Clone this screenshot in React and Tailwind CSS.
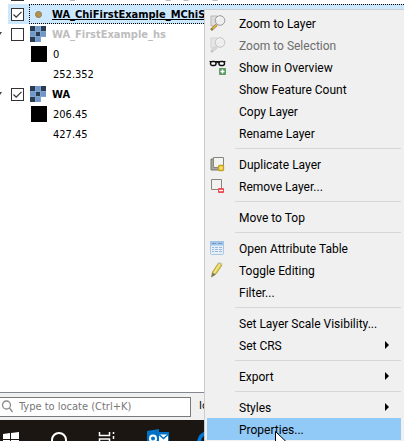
import React from "react";

function Glass({ faded }) {
  return (
    <svg viewBox="0 0 18 18" className={faded ? "size-[18px] opacity-50" : "size-[18px]"} fill="none">
      <path d="M2 2h6v10H2z" fill="#dedede" stroke="#b5b5b5" />
      <path d="M7.500 11l-5.500 5" stroke={faded ? "#999" : "#8d7a4d"} strokeWidth="2.600" />
      <path d="M7.500 11l-4 3.500" stroke={faded ? "#ccc" : "#f0bf2f"} strokeWidth="1.500" />
      <circle cx="11" cy="6.500" r="4.800" fill="#eeeeeecc" stroke="#999" />
      <path d="M8 6a3 3 0 0 1 3-3" stroke="#fff" />
    </svg>
  );
}

function Glasses() {
  return (
    <svg viewBox="0 0 18 18" className="size-[18px]" fill="none">
      <path d="M.5 3.500h16M7 5q1.500-1 3 0" stroke="#111" strokeWidth="1.200" />
      <rect x="1.500" y="3.500" width="5.500" height="4" rx="2" fill="#fff" stroke="#111" strokeWidth="1.400" />
      <rect x="10" y="3.500" width="5.500" height="4" rx="2" fill="#fff" stroke="#111" strokeWidth="1.400" />
      <rect x="10" y="10" width="7" height="7" rx="1" fill="#5b9a62" />
      <path d="M13.500 11.500v4M11.500 13.500h4" stroke="#fff" strokeWidth="1.500" />
    </svg>
  );
}

function Duplicate() {
  return (
    <svg viewBox="0 0 18 18" className="size-[18px]" fill="none">
      <path d="M2 4h10v11H2z" fill="#a6a79f" stroke="#777970" />
      <path d="M4.500 2.500h10v10h-10z" fill="#f2f2f0" stroke="#85877e" />
      <rect x="9.500" y="10.500" width="5" height="5" rx="1" fill="#f6dc72" stroke="#c9a21b" strokeWidth="1.400" />
    </svg>
  );
}

function Remove() {
  return (
    <svg viewBox="0 0 18 18" className="size-[18px]" fill="none">
      <path d="M2.500 2.500h10v10h-10z" fill="#f2f2f0" stroke="#85877e" />
      <rect x="9" y="11" width="6" height="5" rx="1" fill="#ee4a50" />
      <path d="M10 13.500h4" stroke="#fff" strokeWidth="1.300" />
    </svg>
  );
}

function TableIcon() {
  return (
    <svg viewBox="0 0 18 18" className="size-[18px]" fill="none">
      <rect x="1.500" y="2.500" width="13" height="13" rx="1" fill="#e6eef7" stroke="#a9c6e3" />
      <path d="M1 2h14v4.500H1z" fill="#a3c6e8" />
      <path d="M3 4.500h4M9 4.500h4" stroke="#6f9bc8" />
      <path d="M3 8.500h2M6 8.500h3M10 8.500h3M3 10.500h2M6 10.500h3M10 10.500h3M3 12.500h2M6 12.500h3M10 12.500h3" stroke="#9db9d6" />
    </svg>
  );
}

function Pencil() {
  return (
    <svg viewBox="0 0 18 18" className="size-[18px]" fill="none">
      <path d="M2.500 16l1-5 6-9 3.500 2-6 9z" fill="#e3cc45" stroke="#a3973f" strokeWidth=".8" />
      <path d="M5 12l6-9" stroke="#f7ec95" strokeWidth="1.200" />
      <path d="M2.500 16l1-4.500 3 2z" fill="#777" />
      <path d="M9.500 2l3.500 2 .5-1.500-3-1.500z" fill="#c8c8b8" />
    </svg>
  );
}

function Raster() {
  return (
    <svg viewBox="0 0 16 16" className="size-4 shrink-0" shapeRendering="crispEdges">
      <path d="M0 0h16v16H0z" fill="#6f97c8" />
      <path d="M0 0h5v5H0zM11 0h5v5h-5zM6 6h4v4H6zM0 11h5v5H0z" fill="#2b3b50" />
      <path d="M5 0h1v16H5zM10 0h1v16h-1zM0 5h16v1H0zM0 10h16v1H0z" fill="#7fa3d0" />
      <path d="M11 11h5v5h-5z" fill="#fff" />
    </svg>
  );
}

const groups = [
  [
    { label: "Zoom to Layer", icon: <Glass /> },
    { label: "Zoom to Selection", icon: <Glass faded />, disabled: true },
    { label: "Show in Overview", icon: <Glasses /> },
    { label: "Show Feature Count" },
    { label: "Copy Layer" },
    { label: "Rename Layer" },
  ],
  [
    { label: "Duplicate Layer", icon: <Duplicate /> },
    { label: "Remove Layer...", icon: <Remove /> },
  ],
  [{ label: "Move to Top" }],
  [
    { label: "Open Attribute Table", icon: <TableIcon /> },
    { label: "Toggle Editing", icon: <Pencil /> },
    { label: "Filter..." },
  ],
  [{ label: "Set Layer Scale Visibility..." }, { label: "Set CRS", sub: true }],
  [{ label: "Export", sub: true }],
  [{ label: "Styles", sub: true }, { label: "Properties...", active: true }],
];

function MenuItem({ item }) {
  return (
    <button
      type="button"
      role="menuitem"
      disabled={item.disabled}
      className={`flex h-[22px] w-full items-center pr-3 pl-0.5 text-left whitespace-nowrap ${item.active ? "bg-[#91c9f7]" : ""} ${item.disabled ? "text-[#6d6d6d]" : "text-black"}`}
    >
      <span className="w-[30px] shrink-0">{item.icon}</span>
      <span className="flex-1 pt-0.5">{item.label}</span>
      {item.sub && (
        <svg viewBox="0 0 4 8" className="h-2 w-1">
          <path d="M0 0l4 4-4 4z" />
        </svg>
      )}
    </button>
  );
}

function Check({ label, checked }) {
  return (
    <span className="relative flex size-[13px] shrink-0">
      <input
        type="checkbox"
        aria-label={label}
        defaultChecked={checked}
        className="peer size-[13px] appearance-none border border-[#333] bg-white"
      />
      <svg viewBox="0 0 13 13" className="pointer-events-none absolute inset-0 hidden size-[13px] peer-checked:block" fill="none">
        <path d="M2.500 6.500l2.700 2.700 5.300-5.400" stroke="#333" strokeWidth="1.200" />
      </svg>
    </span>
  );
}

function Layer({ name, checked, expandable, selected, muted, icon }) {
  return (
    <div className="flex h-5 items-center">
      <span className="flex w-2 shrink-0">
        {expandable && (
          <svg viewBox="0 0 3 4" className="h-1 w-[3px]">
            <path d="M0 0h2L0 3z" fill="#444" />
          </svg>
        )}
      </span>
      <div className={`flex h-5 flex-1 items-center gap-[5px] pl-[3px] ${selected ? "bg-[#cce8ff]" : ""}`}>
        <Check label={name} checked={checked} />
        <div
          className={`flex h-5 flex-1 items-center gap-1.5 border border-r-0 border-dotted whitespace-nowrap ${selected ? "border-black" : "border-transparent"}`}
        >
          {icon}
          <span className={`pt-0.5 font-bold ${muted ? "text-[#bdbdbd]" : ""} ${selected ? "underline" : ""}`}>{name}</span>
        </div>
      </div>
    </div>
  );
}

function Value({ children, swatch }) {
  return (
    <div className="flex h-5 items-center gap-1.5 pl-[31px]">
      <span className={`size-4 ${swatch ? "bg-black" : ""}`} />
      <span className="pt-0.5">{children}</span>
    </div>
  );
}

function Point() {
  return (
    <span className="flex w-4 shrink-0 justify-center">
      <span className="size-[7px] rounded-full border border-[#8d7d57] bg-[#b5924c]" />
    </span>
  );
}

export default function App() {
  return (
    <div className="relative flex h-screen flex-col overflow-hidden bg-white font-[family-name:'DejaVu_Sans_Condensed','Noto_Sans',sans-serif] text-[11px]">
      <main className="min-h-0 flex-1 overflow-hidden">
        <div className="-mt-4">
          <Layer name="WA_ChiFirstExample_hs_MSg_" muted icon={<Point />} />
          <Layer name="WA_ChiFirstExample_MChiS" checked selected icon={<Point />} />
          <Layer name="WA_FirstExample_hs" expandable muted icon={<Raster />} />
          <Value swatch>0</Value>
          <Value>252.352</Value>
          <Layer name="WA" expandable checked icon={<Raster />} />
          <Value swatch>206.45</Value>
          <Value>427.45</Value>
        </div>
      </main>

      <footer className="flex h-7 shrink-0 items-center gap-2 border-t border-[#828790] bg-[#f0f0f0]">
        <label className="flex h-5 w-[191px] items-center gap-1.5 border border-l-0 border-[#7a7a7a] bg-white">
          <svg viewBox="0 0 13 13" className="size-[13px]" fill="none" stroke="#8b8b8b" strokeWidth="1.300">
            <circle cx="6.500" cy="5" r="4" />
            <path d="M9.500 8l3 4" />
          </svg>
          <input
            aria-label="Type to locate"
            placeholder="Type to locate (Ctrl+K)"
            className="min-w-0 flex-1 pt-0.5 outline-none placeholder:text-[#777]"
          />
        </label>
        <span>Ic</span>
      </footer>

      <nav aria-label="Taskbar" className="flex h-[21px] shrink-0 items-end bg-[#1b1612]">
        <svg viewBox="0 0 210 21" className="h-[21px] w-[210px]" fill="none">
          <path d="M3 14l7-1v6H3zM11 13l8-1v7h-8zM3 20h7v1H3zM11 20h8v1h-8z" fill="#fff" />
          <circle cx="59" cy="20" r="7" stroke="#fff" strokeWidth="2" />
          <path d="M99.500 12v3.500h10V12M99.500 21v-2h10v2M113.500 12v2M113.500 16v3" stroke="#fff" strokeWidth="1.500" />
          <path d="M159 12h10v9h-10z" fill="#0072c6" />
          <path d="M159 14.500h9v6.500h-9z" fill="#fff" />
          <path d="M147 11l12-2v12h-12z" fill="#0072c6" />
          <circle cx="153" cy="18.500" r="3" stroke="#fff" strokeWidth="2" />
          <path d="M159 14.500l4.500 4 4.500-4" stroke="#0072c6" strokeWidth="1.500" />
          <path d="M197 21q2-8 9-10v4q-4 1-5 6z" fill="#0078d7" />
        </svg>
      </nav>

      <div
        role="menu"
        aria-label="Layer"
        className="absolute top-[9px] right-0 left-[204px] border-t border-l border-[#ccc] bg-[#f0f0f0] py-0.5 pr-[3px] pl-0.5 font-[family-name:Roboto,sans-serif] text-[12px]"
      >
        {groups.map((group, i) => (
          <React.Fragment key={i}>
            {i > 0 && (
              <div role="separator" className="flex h-[9px] items-center pl-7">
                <span className="h-px flex-1 bg-[#d7d7d7]" />
              </div>
            )}
            {group.map((item) => (
              <MenuItem key={item.label} item={item} />
            ))}
          </React.Fragment>
        ))}
      </div>

      <svg viewBox="0 0 12 19" className="pointer-events-none absolute top-[431px] left-[275px] h-[19px] w-3">
        <path d="M.5.500v16l4-4 3 6 2.500-1-3-6h5z" fill="#fff" stroke="#000" />
      </svg>
    </div>
  );
}
